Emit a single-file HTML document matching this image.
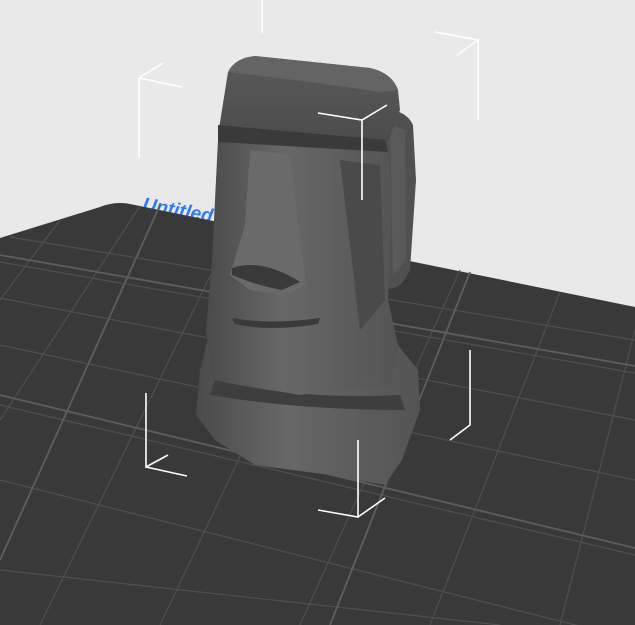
<!DOCTYPE html>
<html><head><style>
html,body{margin:0;padding:0;width:635px;height:625px;overflow:hidden;background:#e9e9e9}
svg{display:block}
</style></head><body>
<svg width="635" height="625" viewBox="0 0 635 625" xmlns="http://www.w3.org/2000/svg">
<defs>
<linearGradient id="face" x1="0" y1="0" x2="1" y2="0">
<stop offset="0" stop-color="#4a4a4a"/><stop offset="0.4" stop-color="#676767"/><stop offset="1" stop-color="#545454"/>
</linearGradient>
<linearGradient id="top" x1="0" y1="0" x2="0" y2="1">
<stop offset="0" stop-color="#5a5a5a"/><stop offset="1" stop-color="#4a4a4a"/>
</linearGradient>
</defs>
<rect width="635" height="625" fill="#e9e9e9"/>
<text x="142" y="210" font-family="Liberation Sans, sans-serif" font-weight="bold" font-style="italic" font-size="19" fill="#2f7cf0" transform="rotate(10 142 210)">Untitled</text>
<path d="M0,238 L100,207 Q115,201 130,204 L635,307 L635,625 L0,625 Z" fill="#393939"/>
<g stroke="#505050" stroke-width="1.2" fill="none">
<path d="M0,262 L635,373"/><path d="M0,298 L635,420"/><path d="M0,345 L635,480"/>
<path d="M0,405 L635,555"/><path d="M0,480 L635,640"/><path d="M0,570 L500,625"/>
<path d="M10,237 L635,340"/>
<path d="M60,220 L0,300"/><path d="M140,206 L0,420"/><path d="M235,225 L40,625"/>
<path d="M340,246 L160,625"/><path d="M460,270 L300,625"/><path d="M560,292 L430,625"/>
<path d="M635,330 L560,625"/>
</g>
<g stroke="#5e5e5e" stroke-width="1.8" fill="none">
<path d="M0,255 L635,366"/><path d="M0,395 L635,548"/><path d="M160,205 L0,560"/><path d="M470,272 L330,625"/>
</g>
<!-- ear -->
<path d="M380,110 Q405,108 413,125 L416,180 L410,270 Q400,292 386,288 Z" fill="#505050"/>
<path d="M390,125 L405,130 L406,260 L393,275 Z" fill="#5a5a5a"/>
<!-- bust -->
<path d="M210,330 L200,370 L196,415 L215,440 L255,465 L330,475 L385,485 L402,460 L420,410 L418,370 L398,345 L360,340 Z" fill="url(#face)"/>
<path d="M215,380 Q300,400 400,395 L405,410 Q300,410 210,395 Z" fill="#3e3e3e"/>
<!-- face -->
<path d="M218,140 L388,150 L392,200 L388,300 L398,345 L392,385 L300,395 L212,380 L206,330 L212,260 Z" fill="url(#face)"/>
<path d="M250,150 L290,155 L300,240 L306,285 L285,295 L250,290 L230,275 L245,225 Z" fill="#6a6a6a"/>
<path d="M232,268 Q262,258 300,282 L282,290 Q255,285 232,275 Z" fill="#3a3a3a"/>
<path d="M232,318 Q270,325 320,318 L318,324 Q270,332 235,324 Z" fill="#3a3a3a"/>
<path d="M340,160 L380,165 L385,300 L360,330 Z" fill="#4a4a4a"/>
<!-- top block -->
<path d="M228,72 Q235,58 255,56 L370,68 Q392,73 398,90 L400,110 L385,150 L255,140 L218,135 Z" fill="url(#top)"/>
<path d="M218,125 L385,140 L388,152 L218,142 Z" fill="#3a3a3a"/>
<path d="M228,72 Q235,58 255,56 L370,68 Q392,73 398,90 L380,92 Q300,80 228,72 Z" fill="#646464"/>
<!-- bbox lines -->
<g stroke="#ffffff" stroke-width="1.6" fill="none">
<path d="M163,63 L139,78 L182,87 M139,78 L139,158"/>
<path d="M262,0 L262,33"/>
<path d="M435,32 L478,40 L457,55 M478,40 L478,120"/>
<path d="M318,113 L362,120 L387,105 M362,120 L362,200"/>
<path d="M146,393 L146,467 L168,455 M146,467 L187,476"/>
<path d="M358,440 L358,517 L318,510 M358,517 L385,498"/>
<path d="M470,350 L470,425 L450,440"/>
</g>
</svg>
</body></html>
